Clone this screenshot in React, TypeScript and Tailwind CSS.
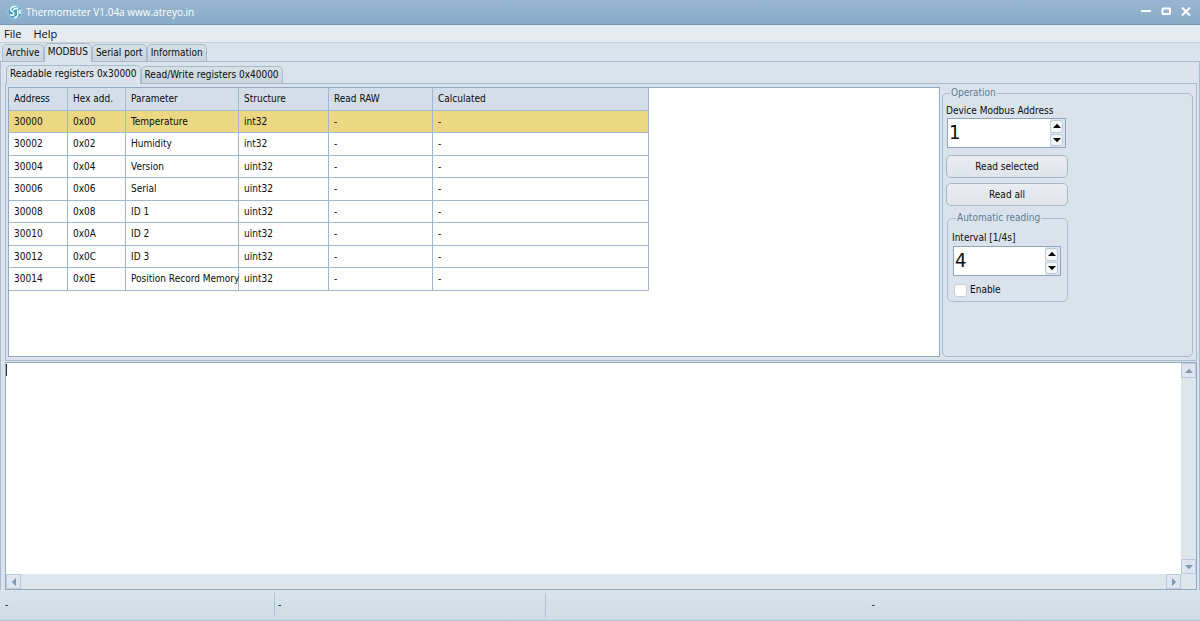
import { useState } from "react";
import clsx from "clsx";

const registers = [
  { address: "30000", hex: "0x00", parameter: "Temperature", structure: "int32" },
  { address: "30002", hex: "0x02", parameter: "Humidity", structure: "int32" },
  { address: "30004", hex: "0x04", parameter: "Version", structure: "uint32" },
  { address: "30006", hex: "0x06", parameter: "Serial", structure: "uint32" },
  { address: "30008", hex: "0x08", parameter: "ID 1", structure: "uint32" },
  { address: "30010", hex: "0x0A", parameter: "ID 2", structure: "uint32" },
  { address: "30012", hex: "0x0C", parameter: "ID 3", structure: "uint32" },
  { address: "30014", hex: "0x0E", parameter: "Position Record Memory", structure: "uint32" },
];

const columns = [
  { label: "Address", width: "w-[59px]" },
  { label: "Hex add.", width: "w-[58px]" },
  { label: "Parameter", width: "w-[113px]" },
  { label: "Structure", width: "w-[90px]" },
  { label: "Read RAW", width: "w-[104px]" },
  { label: "Calculated", width: "w-[216px]" },
];

const Arrow = ({ d, className }: { d: string; className?: string }) => (
  <svg viewBox="0 0 8 8" className={clsx("w-2 h-2 fill-current", className)}>
    <path d={d} />
  </svg>
);

const UP = "M4 1.8 L8 6 H0 Z";
const DOWN = "M0 2 H8 L4 6.2 Z";
const LEFT = "M6 0 V8 L1.8 4 Z";
const RIGHT = "M2 0 L6.2 4 L2 8 Z";

const Logo = () => (
  <svg viewBox="0 0 16 16" className="w-4 h-4">
    <circle cx="8" cy="8" r="7" fill="#3f9cc6" stroke="#b5d6e8" strokeWidth="0.8" />
    <path
      d="M9 2.6 C5.6 2.2 3.4 4 3.6 6 C3.8 8 7 7.4 7 9.6 C7 11.4 5.2 11.6 3.4 10.8 M9.4 4.8 C7.8 4.6 6.4 5 6.4 6 M10.8 6.4 V10 C10.8 12 9.6 13.4 7.4 13.6 M13 6 V9.4 M10.8 3.4 V4.8"
      fill="none"
      stroke="#fff"
      strokeWidth="1.5"
      strokeLinecap="round"
    />
  </svg>
);

const TitleBar = () => (
  <header className="h-[25px] shrink-0 flex items-center justify-between pl-[7px] pr-[9px] bg-linear-to-b from-[#97b5d0] to-[#8aacc8] border-b border-[#7899b6] text-white">
    <div className="flex items-center gap-[3px]">
      <Logo />
      <h1 className="text-[10px] leading-4 font-['Open_Sans','Noto_Sans',sans-serif]">
        Thermometer V1.04a www.atreyo.in
      </h1>
    </div>
    <div className="flex items-center gap-2.5">
      <button aria-label="Minimize">
        <svg viewBox="0 0 10 10" className="w-2.5 h-2.5 block">
          <rect x="0" y="3" width="10" height="2" rx="0.6" fill="#fff" />
        </svg>
      </button>
      <button aria-label="Maximize">
        <svg viewBox="0 0 10 10" className="w-2.5 h-2.5 block">
          <rect x="1.5" y="1.5" width="7.5" height="5.5" rx="0.6" fill="none" stroke="#fff" strokeWidth="2" />
        </svg>
      </button>
      <button aria-label="Close">
        <svg viewBox="0 0 10 10" className="w-2.5 h-2.5 block">
          <path d="M1 0.5 L9 8.5 M9 0.5 L1 8.5" stroke="#fff" strokeWidth="2" />
        </svg>
      </button>
    </div>
  </header>
);

const Tab = ({ label, active, onClick }: any) => (
  <button
    role="tab"
    aria-selected={active}
    onClick={onClick}
    className={clsx(
      "border border-b-0 border-[#a9bccb] rounded-t-[5px] px-[3px] whitespace-nowrap",
      active
        ? "h-[19px] pb-0.5 -mb-px bg-[#dae3ec] z-10"
        : "h-[17px] bg-linear-to-b from-[#d6e0e7] to-[#c6d4dd]"
    )}
  >
    {label}
  </button>
);

const Spinner = ({ id, value, onChange }: any) => (
  <div className="flex h-[30px] border border-[#8fa5c0] bg-white">
    <input
      id={id}
      type="text"
      inputMode="numeric"
      value={value}
      onChange={(e) => onChange(Number(e.target.value) || 0)}
      className="min-w-0 flex-1 pl-px pb-0.5 text-[20px] leading-6 outline-none"
    />
    <div className="w-[15px] flex flex-col gap-px py-px pr-0.5 bg-[#dce5ee]">
      <button
        aria-label="Increase"
        onClick={() => onChange(value + 1)}
        className="flex-1 flex items-center justify-center rounded-[3px] border border-[#bccbda] bg-[#f4f6f8]"
      >
        <Arrow d={UP} />
      </button>
      <button
        aria-label="Decrease"
        onClick={() => onChange(Math.max(0, value - 1))}
        className="flex-1 flex items-center justify-center rounded-[3px] border border-[#bccbda] bg-[#f4f6f8]"
      >
        <Arrow d={DOWN} />
      </button>
    </div>
  </div>
);

const ActionButton = ({ children }: any) => (
  <button className="h-[23px] w-[122px] rounded-[5px] border border-[#a6b8cc] bg-linear-to-b from-[#eaedf2] to-[#dfe4eb]">
    {children}
  </button>
);

const ScrollButton = ({ label, d }: { label: string; d: string }) => (
  <button
    aria-label={label}
    className="w-[15px] h-[15px] shrink-0 flex items-center justify-center border border-[#bccbdc] bg-[#dde6ee] text-[#8197b3]"
  >
    <Arrow d={d} />
  </button>
);

const RegisterTable = ({ selected, onSelect }: any) => (
  <div className="flex-1 min-w-0 overflow-hidden bg-white border border-[#93aac2]">
    <table className="w-[640px] -ml-px -mt-px table-fixed border-collapse text-left">
      <thead>
        <tr className="h-[23px] bg-[#d3dee8]">
          {columns.map((column) => (
            <th
              key={column.label}
              className={clsx("border border-[#9fb7cf] px-[5px] py-0 font-normal", column.width)}
            >
              {column.label}
            </th>
          ))}
        </tr>
      </thead>
      <tbody>
        {registers.map((register, idx) => (
          <tr
            key={register.address}
            onClick={() => onSelect(idx)}
            className={clsx(
              "odd:h-[22px] even:h-[23px]",
              idx === selected ? "bg-[#ecd782]" : "bg-white"
            )}
          >
            {[register.address, register.hex, register.parameter, register.structure, "-", "-"].map(
              (value, cell) => (
                <td key={cell} className="border border-[#9fb7cf] pl-[5px] py-0 whitespace-nowrap">
                  {value}
                </td>
              )
            )}
          </tr>
        ))}
      </tbody>
    </table>
  </div>
);

const OperationPanel = () => {
  const [deviceAddress, setDeviceAddress] = useState(1);
  const [interval, setInterval] = useState(4);
  const [enabled, setEnabled] = useState(false);

  return (
    <fieldset className="w-[251px] shrink-0 rounded-[5px] border border-[#a9bccd] pl-[3px] pb-1">
      <legend className="ml-1 px-px leading-3 text-[#5c7c92]">Operation</legend>
      <label htmlFor="device-address" className="block leading-3 mt-1.5 mb-px">
        Device Modbus Address
      </label>
      <div className="w-[120px] pl-px">
        <Spinner id="device-address" value={deviceAddress} onChange={setDeviceAddress} />
      </div>
      <div className="flex flex-col gap-[5px] mt-[7px]">
        <ActionButton>Read selected</ActionButton>
        <ActionButton>Read all</ActionButton>
      </div>
      <fieldset className="w-[121px] ml-px mt-1.5 rounded-[5px] border border-[#a9bccd] px-1 pb-1">
        <legend className="ml-1 px-px leading-3 text-[#5c7c92]">Automatic reading</legend>
        <label htmlFor="interval" className="block leading-3 mt-2 mb-0.5">
          Interval [1/4s]
        </label>
        <div className="w-[109px] pl-px">
          <Spinner id="interval" value={interval} onChange={setInterval} />
        </div>
        <label className="flex items-center gap-[3px] mt-[7px] ml-0.5 leading-[14px]">
          <input
            type="checkbox"
            checked={enabled}
            onChange={(e) => setEnabled(e.target.checked)}
            className="appearance-none w-[13px] h-[13px] rounded-[3px] border border-[#c3d0dc] bg-white checked:bg-[#8197b3]"
          />
          Enable
        </label>
      </fieldset>
    </fieldset>
  );
};

const LogView = () => (
  <div className="flex-1 min-h-0 flex flex-col border border-[#93aac2] bg-[#dde5ed]">
    <div className="flex-1 min-h-0 flex">
      <div className="relative flex-1 flex">
        <textarea aria-label="Log" className="flex-1 resize-none bg-white outline-none px-0.5" />
        {/* text cursor */}
        <span className="absolute left-0 top-px w-px h-3 bg-[#333]" />
      </div>
      <div className="w-[15px] flex flex-col justify-between">
        <ScrollButton label="Scroll up" d={UP} />
        <ScrollButton label="Scroll down" d={DOWN} />
      </div>
    </div>
    <div className="flex justify-between mr-[15px]">
      <ScrollButton label="Scroll left" d={LEFT} />
      <ScrollButton label="Scroll right" d={RIGHT} />
    </div>
  </div>
);

const StatusBar = () => (
  <footer className="h-[31px] shrink-0 flex items-stretch py-[3px] border-b border-[#aac0d0] bg-linear-to-b from-[#d9e4ea] to-[#cedce4] leading-6">
    <span className="w-[275px] pl-[5px] border-r border-[#b0c4d4]">-</span>
    <span className="w-[271px] pl-[3px] border-r border-[#b0c4d4]">-</span>
    <span className="flex-1 text-center">-</span>
  </footer>
);

const App = () => {
  const [mainTab, setMainTab] = useState("MODBUS");
  const [registerTab, setRegisterTab] = useState(0);
  const [selected, setSelected] = useState(0);

  return (
    <div className="h-screen flex flex-col bg-[#dae3ec] text-[#0c0c0c] text-[10px] leading-3 font-['DejaVu_Sans_Condensed','DejaVu_Sans',sans-serif]">
      <TitleBar />
      <nav className="h-[18px] shrink-0 flex items-center gap-3 px-1 bg-[#e6ebf0] border-b border-[#c3d0db] text-[11px] font-['Open_Sans','Noto_Sans',sans-serif]">
        <button>File</button>
        <button>Help</button>
      </nav>
      <div role="tablist" className="h-[18px] shrink-0 flex items-end pl-0.5">
        {["Archive", "MODBUS", "Serial port", "Information"].map((label) => (
          <Tab
            key={label}
            label={label}
            active={mainTab === label}
            onClick={() => setMainTab(label)}
          />
        ))}
      </div>
      <main className="flex-1 min-h-0 flex flex-col pl-1 pr-0.5 pt-[3px] border border-b-0 border-[#a9bccb]">
        <div role="tablist" className="h-[18px] shrink-0 flex items-end pl-px">
          {["Readable registers 0x30000", "Read/Write registers 0x40000"].map((label, idx) => (
            <Tab
              key={label}
              label={label}
              active={registerTab === idx}
              onClick={() => setRegisterTab(idx)}
            />
          ))}
        </div>
        <section className="h-[278px] shrink-0 flex gap-0.5 p-[3px] pl-0.5 border border-[#a9bccb]">
          <RegisterTable selected={selected} onSelect={setSelected} />
          <OperationPanel />
        </section>
        <div className="flex-1 min-h-0 flex pt-px">
          <LogView />
        </div>
      </main>
      <StatusBar />
    </div>
  );
};

export default App;
